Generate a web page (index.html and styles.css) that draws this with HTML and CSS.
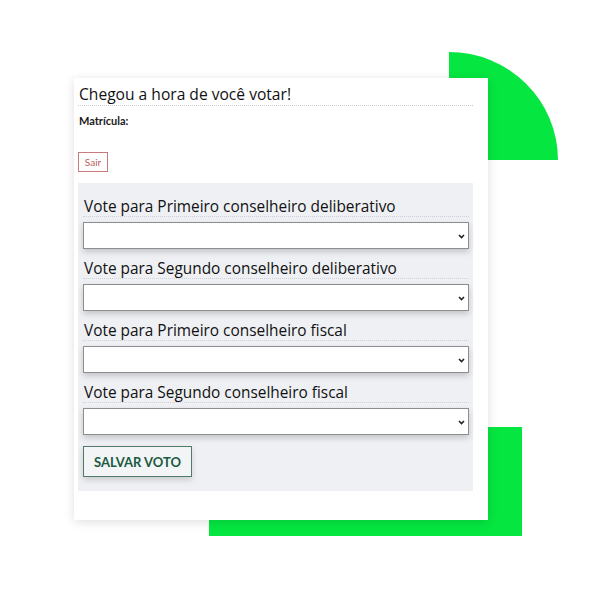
FILE: index.html
```html
<!DOCTYPE html>
<html lang="pt-BR">
<head>
<meta charset="utf-8">
<title>Votação</title>
<link rel="stylesheet" href="styles.css">
</head>
<body>
<div class="stage">
  <div class="deco deco-quarter"></div>
  <div class="deco deco-rect"></div>
  <div class="card">
    <h1 class="title">Chegou a hora de você votar!</h1>
    <div class="matricula">Matrícula:</div>
    <button class="btn-sair" type="button">Sair</button>
    <form class="panel">
      <div class="group">
        <label class="label">Vote para Primeiro conselheiro deliberativo</label>
        <div class="select-wrap">
          <select class="select"><option></option></select>
          <svg class="chev" width="7" height="5" viewBox="0 0 7 5"><path d="M1 1 L3.5 3.5 L6 1" fill="none" stroke="#222" stroke-width="1.6"/></svg>
        </div>
      </div>
      <div class="group">
        <label class="label">Vote para Segundo conselheiro deliberativo</label>
        <div class="select-wrap">
          <select class="select"><option></option></select>
          <svg class="chev" width="7" height="5" viewBox="0 0 7 5"><path d="M1 1 L3.5 3.5 L6 1" fill="none" stroke="#222" stroke-width="1.6"/></svg>
        </div>
      </div>
      <div class="group">
        <label class="label">Vote para Primeiro conselheiro fiscal</label>
        <div class="select-wrap">
          <select class="select"><option></option></select>
          <svg class="chev" width="7" height="5" viewBox="0 0 7 5"><path d="M1 1 L3.5 3.5 L6 1" fill="none" stroke="#222" stroke-width="1.6"/></svg>
        </div>
      </div>
      <div class="group">
        <label class="label">Vote para Segundo conselheiro fiscal</label>
        <div class="select-wrap">
          <select class="select"><option></option></select>
          <svg class="chev" width="7" height="5" viewBox="0 0 7 5"><path d="M1 1 L3.5 3.5 L6 1" fill="none" stroke="#222" stroke-width="1.6"/></svg>
        </div>
      </div>
      <button class="btn-salvar" type="button">SALVAR VOTO</button>
    </form>
  </div>
</div>
</body>
</html>
```
FILE: styles.css
```css
* { box-sizing: border-box; }
html, body { margin: 0; padding: 0; background: #ffffff; }
.stage {
  position: relative;
  width: 600px;
  height: 600px;
  padding: 78px 0 0 74px;
  font-family: "Open Sans", "Noto Sans", sans-serif;
}
.deco { position: absolute; background: #05e640; }
.deco-quarter {
  left: 449px; top: 52px; width: 109px; height: 108px;
  border-top-right-radius: 100% 100%;
}
.deco-rect { left: 209px; top: 427px; width: 313px; height: 109px; }
.card {
  position: relative;
  width: 414px;
  height: 442px;
  background: #ffffff;
  padding: 5px 15px 29px 4px;
  box-shadow: 0 2px 10px rgba(0,0,0,0.13);
}
.title {
  margin: 0;
  font-size: 15.6px;
  font-weight: 500;
  line-height: 22px;
  color: #111;
  padding-left: 1px;
  border-bottom: 1px dotted #c8c8c8;
}
.matricula {
  margin-top: 8px;
  font-family: "Lato", "Open Sans", sans-serif;
  font-weight: 700;
  font-size: 11px;
  line-height: 14px;
  color: #1a1a1a;
  padding-left: 1px;
}
.btn-sair {
  display: block;
  margin-top: 24px;
  width: 30px;
  height: 20px;
  padding: 0;
  border: 1px solid #c97b7b;
  background: #fff;
  color: #c05a5a;
  font-family: "Lato", "Open Sans", sans-serif;
  font-size: 10px;
  line-height: 18px;
  text-align: center;
}
.panel {
  display: flex;
  flex-direction: column;
  margin: 11px 0 0 0;
  background: #eef0f4;
  padding: 14px 4px 14px 5px;
}
.group {
  display: flex;
  flex-direction: column;
  margin-bottom: 10px;
}
.label {
  font-size: 15.4px;
  font-weight: 500;
  line-height: 19px;
  color: #111;
  border-bottom: 1px dotted #cfd1d5;
  padding-left: 1px;
}
.select-wrap {
  position: relative;
  margin-top: 5px;
  width: 386px;
  height: 27px;
}
.select {
  display: block;
  appearance: none;
  -webkit-appearance: none;
  width: 386px;
  height: 27px;
  margin: 0;
  border: 1px solid #8d8d8d;
  border-radius: 0;
  background-color: #ffffff;
  box-shadow: 0 3px 6px rgba(0,0,0,0.18);
  font-size: 13px;
  color: #222;
}
.chev {
  position: absolute;
  right: 4px;
  top: 12px;
}
.btn-salvar {
  align-self: flex-start;
  margin-top: 1px;
  width: 109px;
  height: 31px;
  padding: 0;
  border: 1px solid #4f7a6a;
  background: #f2f4f6;
  color: #1b5a3f;
  font-family: "Lato", "Open Sans", sans-serif;
  font-weight: 700;
  font-size: 13px;
  box-shadow: 0 3px 6px rgba(0,0,0,0.15);
}
```
